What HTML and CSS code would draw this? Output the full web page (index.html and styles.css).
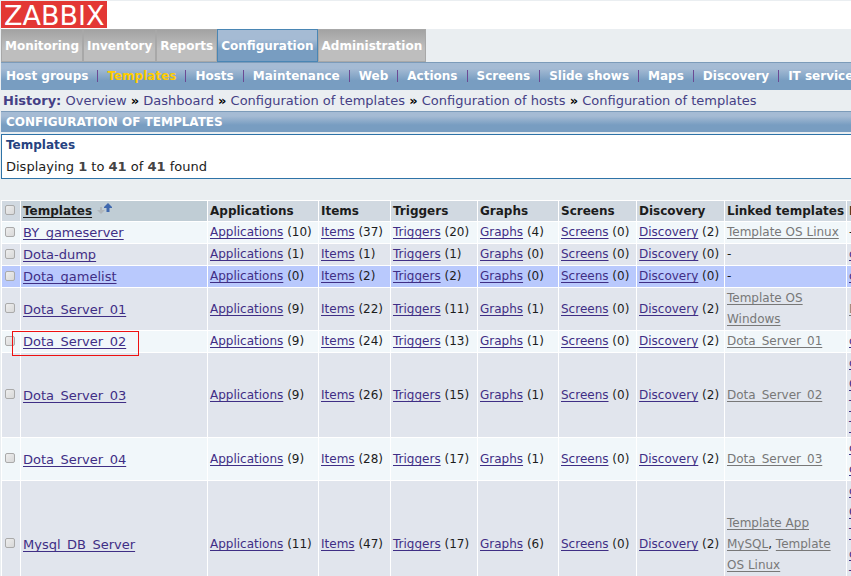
FILE: index.html
```
<!DOCTYPE html>
<html lang="en">
<head>
<meta charset="utf-8">
<title>Configuration of templates</title>
<link rel="stylesheet" href="styles.css">
</head>
<body>
<header class="brand"><a class="logo" href="#">ZABBIX</a></header>
<nav class="tabs" aria-label="Main">
<a href="#">Monitoring</a><a href="#">Inventory</a><a href="#">Reports</a><a class="active" href="#">Configuration</a><a href="#">Administration</a>
</nav>
<nav class="submenu" aria-label="Configuration">
<a href="#">Host groups</a><a class="current" href="#">Templates</a><a href="#">Hosts</a><a href="#">Maintenance</a><a href="#">Web</a><a href="#">Actions</a><a href="#">Screens</a><a href="#">Slide shows</a><a href="#">Maps</a><a href="#">Discovery</a><a href="#">IT services</a>
</nav>
<nav class="history" aria-label="History"><b class="label">History:</b> <a href="#">Overview</a> <b>»</b> <a href="#">Dashboard</a> <b>»</b> <a href="#">Configuration of templates</a> <b>»</b> <a href="#">Configuration of hosts</a> <b>»</b> <a href="#">Configuration of templates</a></nav>
<main>
<h1 class="title">CONFIGURATION OF TEMPLATES</h1>
<section class="summary">
<h2>Templates</h2>
<p>Displaying <b>1</b> to <b>41</b> of <b>41</b> found</p>
</section>
<table class="list">
<colgroup><col class="c-check"><col class="c-name"><col class="c-apps"><col class="c-items"><col class="c-trig"><col class="c-graph"><col class="c-screen"><col class="c-disc"><col class="c-linked"><col class="c-to"></colgroup>
<thead>
<tr><th><input type="checkbox" aria-label="Select all"></th><th class="sorted"><a href="#">Templates</a><svg class="sort" width="18" height="12" viewBox="0 0 18 12" aria-hidden="true"><path d="M4 4h2v3h3L5 11 1 7h3z" fill="#b0b6bb"/><path d="M12 0l4 4v1h-2.500v4h-3V5H8V4z" fill="#3f68ae"/></svg></th><th>Applications</th><th>Items</th><th>Triggers</th><th>Graphs</th><th>Screens</th><th>Discovery</th><th>Linked templates</th><th>Linked to</th></tr>
</thead>
<tbody>
<tr><td><input type="checkbox" aria-label="BY_gameserver"></td><td class="name"><a href="#">BY_gameserver</a></td><td><a href="#">Applications</a> (10)</td><td><a href="#">Items</a> (37)</td><td><a href="#">Triggers</a> (20)</td><td><a href="#">Graphs</a> (4)</td><td><a href="#">Screens</a> (0)</td><td><a href="#">Discovery</a> (2)</td><td class="linked"><a href="#">Template OS Linux</a></td><td>-</td></tr>
<tr><td><input type="checkbox" aria-label="Dota-dump"></td><td class="name"><a href="#">Dota-dump</a></td><td><a href="#">Applications</a> (1)</td><td><a href="#">Items</a> (1)</td><td><a href="#">Triggers</a> (1)</td><td><a href="#">Graphs</a> (0)</td><td><a href="#">Screens</a> (0)</td><td><a href="#">Discovery</a> (0)</td><td>-</td><td><a href="#">c</a></td></tr>
<tr class="hover"><td><input type="checkbox" aria-label="Dota_gamelist"></td><td class="name"><a href="#">Dota_gamelist</a></td><td><a href="#">Applications</a> (0)</td><td><a href="#">Items</a> (2)</td><td><a href="#">Triggers</a> (2)</td><td><a href="#">Graphs</a> (0)</td><td><a href="#">Screens</a> (0)</td><td><a href="#">Discovery</a> (0)</td><td>-</td><td><a href="#">c</a></td></tr>
<tr><td><input type="checkbox" aria-label="Dota_Server_01"></td><td class="name"><a href="#">Dota_Server_01</a></td><td><a href="#">Applications</a> (9)</td><td><a href="#">Items</a> (22)</td><td><a href="#">Triggers</a> (11)</td><td><a href="#">Graphs</a> (1)</td><td><a href="#">Screens</a> (0)</td><td><a href="#">Discovery</a> (2)</td><td class="linked"><a href="#">Template OS Windows</a></td><td class="linked"><a href="#">D</a></td></tr>
<tr><td><input type="checkbox" aria-label="Dota_Server_02"></td><td class="name marked"><a href="#">Dota_Server_02</a></td><td><a href="#">Applications</a> (9)</td><td><a href="#">Items</a> (24)</td><td><a href="#">Triggers</a> (13)</td><td><a href="#">Graphs</a> (1)</td><td><a href="#">Screens</a> (0)</td><td><a href="#">Discovery</a> (2)</td><td class="linked"><a href="#">Dota_Server_01</a></td><td><a href="#">c</a></td></tr>
<tr><td><input type="checkbox" aria-label="Dota_Server_03"></td><td class="name"><a href="#">Dota_Server_03</a></td><td><a href="#">Applications</a> (9)</td><td><a href="#">Items</a> (26)</td><td><a href="#">Triggers</a> (15)</td><td><a href="#">Graphs</a> (1)</td><td><a href="#">Screens</a> (0)</td><td><a href="#">Discovery</a> (2)</td><td class="linked"><a href="#">Dota_Server_02</a></td><td><a href="#">c</a><br><a href="#">C</a><br><a href="#">T</a><br><a href="#">T</a></td></tr>
<tr class="light"><td><input type="checkbox" aria-label="Dota_Server_04"></td><td class="name"><a href="#">Dota_Server_04</a></td><td><a href="#">Applications</a> (9)</td><td><a href="#">Items</a> (28)</td><td><a href="#">Triggers</a> (17)</td><td><a href="#">Graphs</a> (1)</td><td><a href="#">Screens</a> (0)</td><td><a href="#">Discovery</a> (2)</td><td class="linked"><a href="#">Dota_Server_03</a></td><td><a href="#">c</a><br><a href="#">c</a></td></tr>
<tr><td><input type="checkbox" aria-label="Mysql_DB_Server"></td><td class="name"><a href="#">Mysql_DB_Server</a></td><td><a href="#">Applications</a> (11)</td><td><a href="#">Items</a> (47)</td><td><a href="#">Triggers</a> (17)</td><td><a href="#">Graphs</a> (6)</td><td><a href="#">Screens</a> (0)</td><td><a href="#">Discovery</a> (2)</td><td class="linked"><a href="#">Template App MySQL</a>, <a href="#">Template OS Linux</a></td><td><a href="#">c</a><br><a href="#">C</a><br><a href="#">T</a><br><a href="#">c</a><br><a href="#">T</a><br><a href="#">T</a></td></tr>
</tbody>
</table>
</main>
</body>
</html>
```

FILE: styles.css
```
*, *::before, *::after { box-sizing: border-box; }
html { overflow: hidden; }
body {
  margin: 0;
  padding: 1px 0 0 1px;
  background: #eaeef1;
  color: #1c1c1c;
  font: 13px/21px "DejaVu Sans", Verdana, sans-serif;
  white-space: nowrap;
}
a { color: #3f2e85; }
nav a { text-decoration: none; }

.brand { background: #fff; height: 28px; }
.logo {
  display: inline-block;
  height: 27px;
  padding: 0 3px;
  background: #e33734;
  color: #fff;
  font-size: 27px;
  line-height: 29px;
  text-decoration: none;
}

.tabs { display: flex; font-weight: bold; font-size: 12px; }
.tabs a {
  height: 33px;
  padding: 0 3px;
  border: 1px solid #a8a8a8;
  background: linear-gradient(#a3a3a3, #bebebe 60%);
  color: #fff;
  line-height: 32px;
}
.tabs .active {
  border-color: #4a86b4;
  background: linear-gradient(#a5bbd4 30%, #789dc1 65%);
}

.submenu {
  display: flex;
  height: 28px;
  padding-left: 5px;
  border-top: 1px solid #7c9bb9;
  background: linear-gradient(#a5bbd4 20%, #789dc1 65%);
  font-weight: bold;
  font-size: 12px;
  line-height: 26px;
}
.submenu a { color: #fff; }
.submenu .current { color: #fc0; }
.submenu a + a::before {
  content: "";
  display: inline-block;
  width: 1px;
  height: 12px;
  margin: 0 9px;
  background: #6b4a94;
  vertical-align: -2px;
}

.history { height: 21px; padding-left: 2px; color: #000; }
.history a, .history .label { color: #453f85; }

.title {
  margin: 0;
  padding-left: 5px;
  height: 21px;
  border-top: 1px solid #7c9bb9;
  background: linear-gradient(#a5bbd4 20%, #789dc1 65%);
  color: #fff;
  font-size: 12px;
  line-height: 20px;
}
.summary {
  margin: 2px 0 21px;
  padding: 0 4px;
  border: 1px solid #2e73a7;
  border-right: 0;
  background: #fff;
}
.summary h2 { margin: 0; color: #264280; font-size: 12px; line-height: 21px; }
.summary p { margin: 0; line-height: 22px; }
.summary b { color: #444; }

.list {
  width: 940px;
  table-layout: fixed;
  border-collapse: separate;
  border-spacing: 1px;
  background: #fff;
  font-size: 12px;
  text-align: left;
}
.c-check { width: 18px; }
.c-name { width: 186px; }
.c-apps { width: 110px; }
.c-items { width: 71px; }
.c-trig { width: 86px; }
.c-graph { width: 80px; }
.c-screen { width: 77px; }
.c-disc { width: 87px; }
.c-linked { width: 121px; }
.list th, .list td { padding: 0 0 0 2px; background: #e1e5ed; vertical-align: middle; }
.list th { height: 20px; line-height: 20px; background: #d1d9e1; }
.list .sorted { background: #c0cdd5; }
.list th a { color: #1c1c1c; }
.list a { text-decoration-skip-ink: none; text-underline-offset: 2px; }
.list tbody tr:nth-child(1) td,
.list tbody tr:nth-child(5) td,
.list tbody tr.light td { background: #f1f7fa; }
.list tbody tr.hover td { background: #b9c9fd; }
.list .name { font-size: 13px; }
.list .linked { white-space: normal; }
.list .linked a { color: #787878; }
.sort { margin-left: 4px; }
.list .marked { position: relative; }
.marked::after {
  content: "";
  position: absolute;
  z-index: 1;
  left: -9px;
  top: 0;
  width: 127px;
  height: 25px;
  border: 1px solid #e11;
}
.list input {
  display: block;
  appearance: none;
  width: 10px;
  height: 10px;
  margin: 0 0 2px 1px;
  border: 1px solid #aaa;
  border-radius: 2px;
  background: linear-gradient(135deg, #eee, #d8d8d8);
}
```
